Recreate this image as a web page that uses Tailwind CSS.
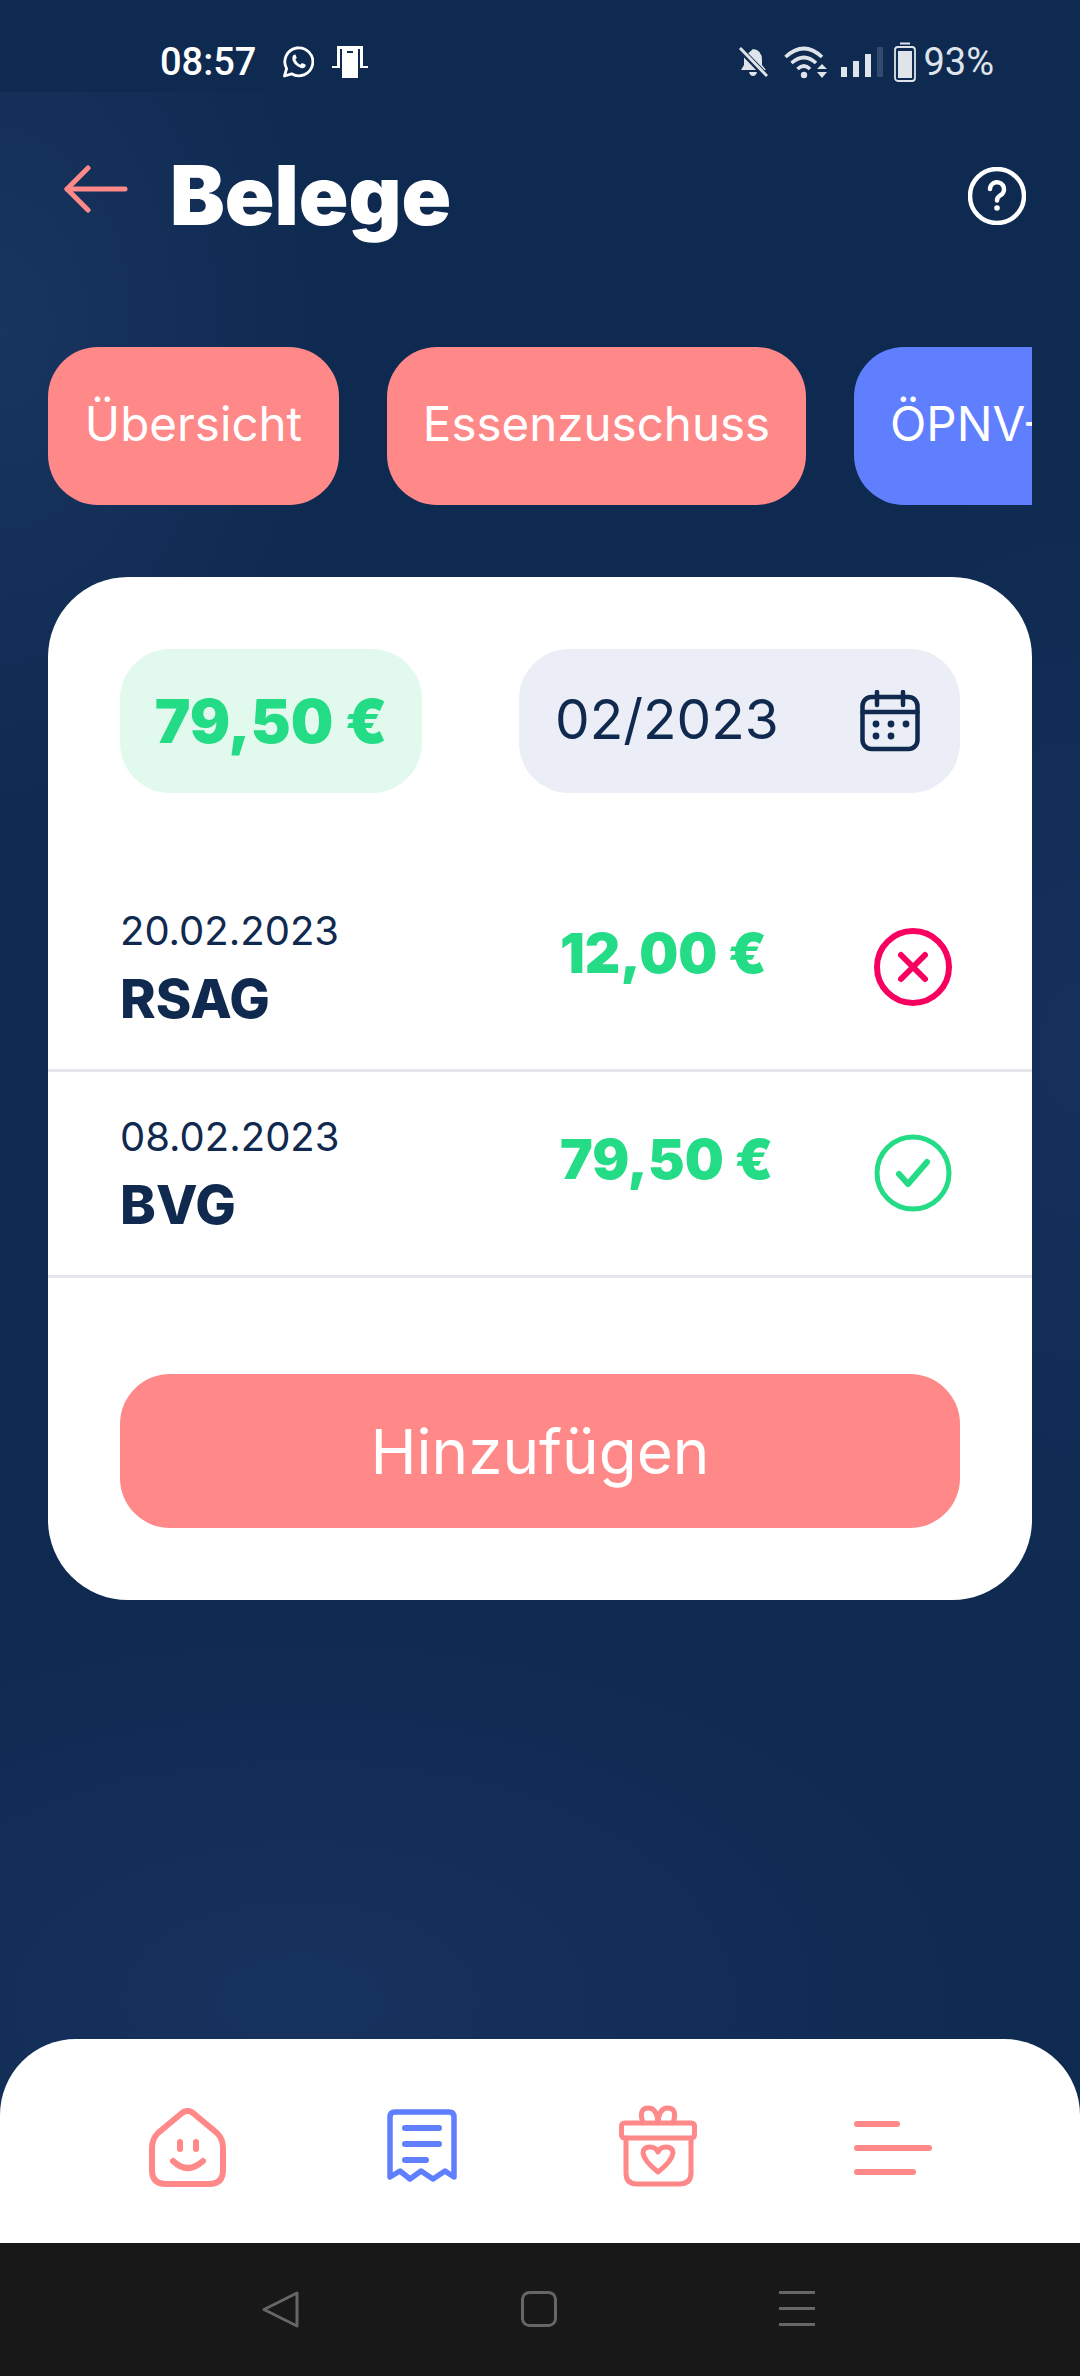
<!DOCTYPE html>
<html lang="de">
<head>
  <meta charset="UTF-8" />
  <meta name="viewport" content="width=device-width, initial-scale=1.0" />
  <title>Belege</title>
  <script src="https://cdn.jsdelivr.net/npm/@tailwindcss/browser@4"></script>
</head>
<body class="bg-[#0f2a50]">
  <div class="w-[1080px] h-[2376px] flex flex-col overflow-hidden font-['Inter','Roboto',sans-serif] bg-[#0f2a50] bg-[radial-gradient(ellipse_340px_520px_at_0px_330px,#183560,transparent),radial-gradient(ellipse_380px_620px_at_1080px_1050px,#15315c,transparent),radial-gradient(ellipse_760px_420px_at_300px_2000px,#16325e,transparent)]">

    <!-- Status bar -->
    <div class="h-[92px] shrink-0 bg-[#0f2a50] flex items-center justify-between pl-[160px] pr-[86px] pt-[32px]">
      <div class="flex items-center">
        <span class="font-['Roboto',sans-serif] font-medium text-[38px] leading-none text-white w-[122px]">08:57</span>
        <svg class="w-[32px] h-[32px] mr-[18px]" viewBox="0 0 32 32" fill="none">
          <path d="M2.5 30 L4.6 22.6 A14 14 0 1 1 9.6 27.8 Z" stroke="#fff" stroke-width="2.8" stroke-linejoin="round"/>
          <path d="M11.5 9 Q9.5 11 10.5 14 Q12.5 19.5 19 22 Q22 22.8 23.5 20.5 L23.5 18.6 L20 17 L18.4 18.8 Q14.8 17 13.3 13.6 L14.8 12 L13.4 8.6 Z" fill="#fff"/>
        </svg>
        <svg class="w-[36px] h-[32px]" viewBox="0 0 36 32" fill="#fff">
          <path d="M5 0 H31 V20 H28 V3 H8 V20 H5 Z"/>
          <rect x="0" y="20" width="8" height="2"/>
          <rect x="28" y="20" width="8" height="2"/>
          <path d="M10 2 H26 V32 H10 Z M15 5 V7 H21 V5 Z" fill-rule="evenodd"/>
        </svg>
      </div>
      <div class="flex items-center">
        <svg class="w-[30px] h-[30px] mr-[16px]" viewBox="0 0 30 30" fill="#dfe3ea">
          <path d="M15 2 Q24 3 24 13 V18 L28 23 H6 L3 23 L6 18 V10 Z"/>
          <path d="M11 25 H19 Q18 29 15 29 Q12 29 11 25 Z"/>
          <path d="M2 2 L28 29" stroke="#0f2a50" stroke-width="6"/>
          <path d="M2 1 L29 29" stroke="#dfe3ea" stroke-width="3"/>
        </svg>
        <svg class="w-[44px] h-[34px] mr-[13px]" viewBox="0 0 44 34" fill="none" stroke="#dfe3ea" stroke-width="3.6">
          <path d="M1.5 12 Q20 -5 38 12"/>
          <path d="M7.5 18 Q20 7 32 18"/>
          <path d="M13.5 24 Q20 18 26 24"/>
          <circle cx="20" cy="30" r="3.2" fill="#dfe3ea" stroke="none"/>
          <path d="M33 24 H43 L38 19 Z M33 27 H43 L38 33 Z" fill="#dfe3ea" stroke="none"/>
        </svg>
        <div class="flex items-end gap-[6px] h-[30px] mr-[11px]">
          <div class="w-[6px] h-[10px] bg-[#dfe3ea]"></div>
          <div class="w-[6px] h-[16px] bg-[#dfe3ea]"></div>
          <div class="w-[6px] h-[23px] bg-[#dfe3ea]"></div>
          <div class="w-[6px] h-[30px] bg-[#33496e]"></div>
        </div>
        <svg class="w-[22px] h-[40px] mr-[7px]" viewBox="0 0 22 40" fill="none">
          <rect x="6" y="0.5" width="10" height="2" fill="#dfe3ea"/>
          <rect x="1" y="5" width="20" height="34" rx="3" stroke="#dfe3ea" stroke-width="1.8"/>
          <rect x="4" y="9" width="14" height="27" fill="#dfe3ea"/>
        </svg>
        <span class="font-['Roboto',sans-serif] text-[38px] leading-none text-[#dfe3ea]">93%</span>
      </div>
    </div>

    <!-- Header -->
    <div class="mt-[30px] h-[148px] shrink-0 flex items-center justify-between pl-[64px] pr-[54px]">
      <div class="flex items-center">
        <svg class="w-[64px] h-[48px] mr-[42px] mt-[-14px]" viewBox="0 0 64 48" fill="none" stroke="#ff8888" stroke-width="5" stroke-linecap="round" stroke-linejoin="round">
          <path d="M24 3 L3 24 L24 45"/>
          <path d="M3 24 H61"/>
        </svg>
        <h1 class="font-black text-[82px] leading-none text-white">Belege</h1>
      </div>
      <svg class="w-[58px] h-[58px]" viewBox="0 0 58 58" fill="none" stroke="#fff" stroke-width="4.5" stroke-linecap="round">
        <circle cx="29" cy="29" r="27"/>
        <path d="M22 22 A7 7 0 1 1 32 28.5 Q29 30.5 29 33.5"/>
        <circle cx="29" cy="41" r="2.8" fill="#fff" stroke="none"/>
      </svg>
    </div>

    <!-- Tabs -->
    <div class="mt-[77px] mx-[48px] h-[158px] shrink-0 flex gap-[48px] overflow-hidden">
      <div class="shrink-0 w-[291px] pb-[5px] rounded-[50px] bg-[#ff8888] flex items-center justify-center text-[47.5px] text-white">Übersicht</div>
      <div class="shrink-0 w-[419px] pb-[5px] rounded-[50px] bg-[#ff8888] flex items-center justify-center text-[47.5px] text-white">Essenzuschuss</div>
      <div class="shrink-0 w-[430px] pb-[5px] rounded-[50px] bg-[#5f7fff] flex items-center pl-[36px] text-[47.5px] text-white whitespace-nowrap">ÖPNV-Zuschuss</div>
    </div>

    <!-- Card -->
    <div class="mt-[72px] mx-[48px] h-[1023px] shrink-0 bg-white rounded-[80px] pt-[72px]">
      <div class="flex justify-between px-[72px]">
        <div class="w-[302px] h-[144px] rounded-[50px] bg-[#e2faee] flex items-center justify-center font-black text-[60px] text-[#24db86]">79,50 €</div>
        <div class="w-[441px] h-[144px] rounded-[50px] bg-[#ebeef6] flex items-center justify-between pl-[36px] pr-[40px] text-[55px] text-[#10294f]">
          <span class="mb-[3px]">02/2023</span>
          <svg class="w-[60px] h-[62px]" viewBox="0 0 60 62" fill="none" stroke="#10294f" stroke-width="4.5" stroke-linecap="round">
            <rect x="2.5" y="7" width="55" height="52" rx="9"/>
            <path d="M2.5 22 H57.5"/>
            <path d="M17 2 V15 M43 2 V15"/>
            <g fill="#10294f" stroke="none">
              <circle cx="16" cy="34" r="3.4"/><circle cx="31" cy="34" r="3.4"/><circle cx="46" cy="34" r="3.4"/>
              <circle cx="16" cy="46" r="3.4"/><circle cx="31" cy="46" r="3.4"/>
            </g>
          </svg>
        </div>
      </div>

      <div class="mt-[73px] h-[206px] border-b-[3px] border-[#e5e5ec] flex items-start pl-[72px] pt-[40px]">
        <div class="w-[440px] text-[#10294f]">
          <div class="text-[40px] leading-[48px] mt-[1px]">20.02.2023</div>
          <div class="font-extrabold text-[54px] leading-[64px] mt-[12px]">RSAG</div>
        </div>
        <div class="w-[314px] pt-[15px] font-black text-[55px] leading-[64px] text-[#24db86]">12,00 €</div>
        <svg class="w-[78px] h-[78px] mt-[22px]" viewBox="0 0 78 78" fill="none" stroke="#f7005f" stroke-width="6" stroke-linecap="round">
          <circle cx="39" cy="39" r="36"/>
          <path d="M27 27 L51 51 M51 27 L27 51"/>
        </svg>
      </div>

      <div class="h-[206px] border-b-[3px] border-[#e5e5ec] flex items-start pl-[72px] pt-[40px]">
        <div class="w-[440px] text-[#10294f]">
          <div class="text-[40px] leading-[48px] mt-[1px]">08.02.2023</div>
          <div class="font-extrabold text-[54px] leading-[64px] mt-[12px]">BVG</div>
        </div>
        <div class="w-[314px] pt-[15px] font-black text-[55px] leading-[64px] text-[#24db86]">79,50 €</div>
        <svg class="w-[78px] h-[78px] mt-[22px]" viewBox="0 0 78 78" fill="none" stroke="#24db86" stroke-width="5" stroke-linecap="round" stroke-linejoin="round">
          <circle cx="39" cy="39" r="36"/>
          <path d="M25 40 L34 50 L53 28" stroke-width="6"/>
        </svg>
      </div>

      <div class="mt-[96px] mx-[72px] h-[154px] rounded-[50px] bg-[#ff8888] flex items-center justify-center text-[62px] text-white">Hinzufügen</div>
    </div>

    <div class="flex-1"></div>

    <!-- Bottom nav -->
    <div class="h-[204px] shrink-0 bg-white rounded-t-[76px] relative">
      <svg class="absolute left-[149px] top-[69px] w-[77px] h-[79px]" viewBox="0 0 77 79" fill="none" stroke="#ff8888" stroke-width="6" stroke-linecap="round" stroke-linejoin="round">
        <path d="M33 5 Q38.5 1 44 5 L68 25 Q74 31 74 40 V62 Q74 76 60 76 H17 Q3 76 3 62 V40 Q3 31 9 25 Z"/>
        <path d="M31 34 V41 M47 34 V41"/>
        <path d="M24 53 Q38.5 67 54 53"/>
      </svg>
      <svg class="absolute left-[387px] top-[70px] w-[70px] h-[74px]" viewBox="0 0 70 74" fill="none" stroke="#5f7fff" stroke-width="5.5" stroke-linejoin="round" stroke-linecap="round">
        <path d="M3 8 Q3 3 8 3 H62 Q67 3 67 8 V68 L58 62 L46 70 L34 62 L23 70 L13 62 L3 68 Z"/>
        <path d="M18 19 H52 M18 35 H52 M18 51 H39" stroke-width="6"/>
      </svg>
      <svg class="absolute left-[619px] top-[66px] w-[78px] h-[82px]" viewBox="0 0 78 82" fill="none" stroke="#ff8888" stroke-width="5" stroke-linejoin="round" stroke-linecap="round">
        <rect x="2.5" y="18" width="73" height="15" rx="3"/>
        <path d="M7 33 V68 Q7 79 18 79 H60 Q72 79 72 68 V33"/>
        <path d="M24 18 Q19 3 29.5 3 Q38 3 39 18 Q40 3 48.5 3 Q59 3 54 18"/>
        <path d="M39 67 Q25 56 24 48 Q24 42 31 42 Q37 42 39 47 Q41 42 47 42 Q54 42 54 48 Q53 56 39 67 Z"/>
      </svg>
      <div class="absolute left-[854px] top-[82px] w-[78px] flex flex-col gap-[18px]">
        <div class="w-[46px] h-[6px] rounded-full bg-[#ff8888]"></div>
        <div class="w-[78px] h-[6px] rounded-full bg-[#ff8888]"></div>
        <div class="w-[62px] h-[6px] rounded-full bg-[#ff8888]"></div>
      </div>
    </div>

    <!-- System nav -->
    <div class="h-[133px] shrink-0 bg-[#181818] relative">
      <svg class="absolute left-[262px] top-[48px] w-[37px] h-[37px]" viewBox="0 0 37 37" fill="none" stroke="#666" stroke-width="3" stroke-linejoin="round">
        <path d="M2 18.5 L35 2 V35 Z"/>
      </svg>
      <svg class="absolute left-[521px] top-[48px] w-[36px] h-[36px]" viewBox="0 0 36 36" fill="none" stroke="#666" stroke-width="3">
        <rect x="1.5" y="1.5" width="33" height="33" rx="7"/>
      </svg>
      <div class="absolute left-[779px] top-[48px] w-[36px] flex flex-col gap-[13px]">
        <div class="h-[3px] bg-[#666]"></div>
        <div class="h-[3px] bg-[#666]"></div>
        <div class="h-[3px] bg-[#666]"></div>
      </div>
    </div>
  </div>
</body>
</html>
